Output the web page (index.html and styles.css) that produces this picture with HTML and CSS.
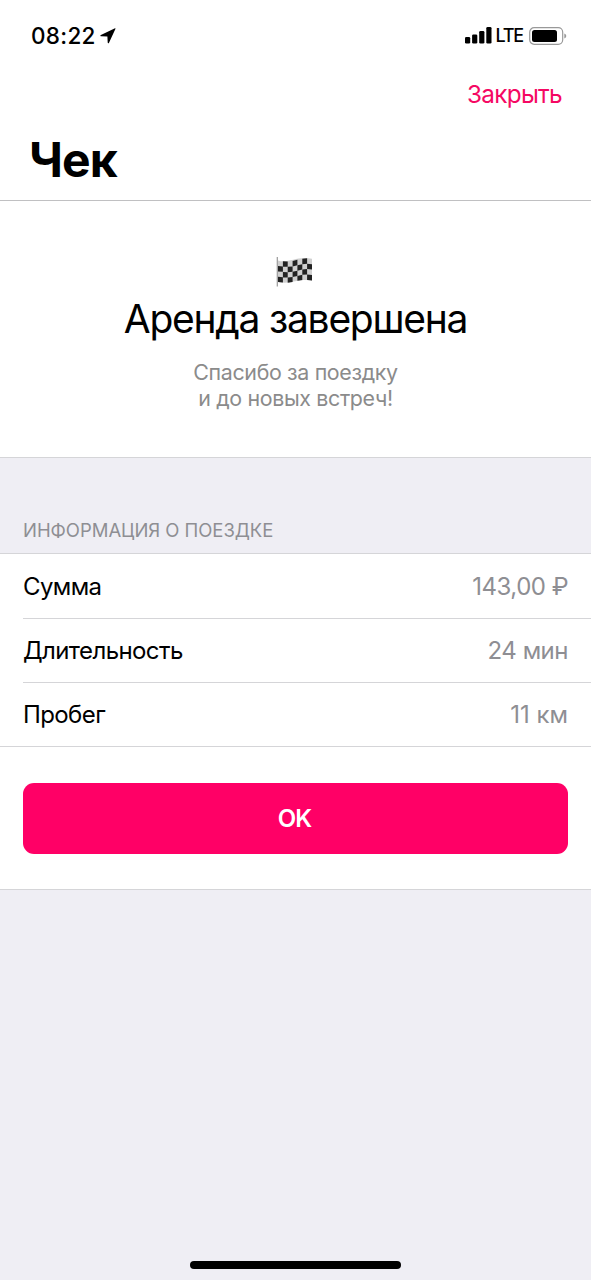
FILE: index.html
```html
<!DOCTYPE html>
<html lang="ru">
<head>
    <meta charset="UTF-8">
    <meta name="viewport" content="width=device-width, initial-scale=1.0">
    <title>Чек</title>
    <link rel="stylesheet" href="styles.css">
</head>
<body>
    <div class="screen">
        <header class="header">
            <div class="status">
                <div class="status-left">
                    <span class="time">08:22</span>
                    <svg class="location" width="16" height="16" viewBox="0 0 16 16">
                        <path d="M15.500.8 9 14.800c-.3.8-1.300.6-1.300-.2L7.400 8.600 1.200 8.300C.3 8.200.1 7.300.9 6.900L15 .3c.4-.1.6.2.5.5z"/>
                    </svg>
                </div>
                <div class="status-right">
                    <svg class="signal" width="27" height="17" viewBox="0 0 27 17">
                        <rect x="0" y="10" width="5.200" height="6.600" rx="1.300"/>
                        <rect x="7.100" y="7.400" width="5.200" height="9.200" rx="1.300"/>
                        <rect x="14.200" y="3.900" width="5.200" height="12.700" rx="1.300"/>
                        <rect x="21.300" y="0" width="5.200" height="16.600" rx="1.300"/>
                    </svg>
                    <span class="network">LTE</span>
                    <svg class="battery" width="38" height="18" viewBox="0 0 38 18">
                        <rect x=".7" y=".7" width="33" height="16.600" rx="4.500" fill="none" stroke="#999" stroke-width="1.200"/>
                        <rect x="3" y="3" width="25" height="12" rx="2.500"/>
                        <path d="M35.300 6.500q2 .8 2 2.500t-2 2.500z" fill="#999"/>
                    </svg>
                </div>
            </div>
            <div class="nav">
                <a class="close" href="#">Закрыть</a>
            </div>
            <h1 class="title">Чек</h1>
        </header>

        <section class="result">
            <svg class="flag" width="38" height="32" viewBox="0 0 38 32">
                <path d="M3 4.500C13 8 22-.5 37 2.800V24.500C23 22.500 15 29 3 26z" fill="#d0d0d0"/>
                <!-- 7 x 4 checks, every column follows the wave -->
                <g fill="#222">
                    <path d="M3 10l4.900.4v5.400L3 15.400zM3 20.800l4.900.5v5.200L3 26z"/>
                    <path d="M7.900 5.300l4.800.1v5.400l-4.800-.1zM7.900 16.100l4.800.1v5.400l-4.800-.1z"/>
                    <path d="M12.700 10.800l4.900-.4v5.400l-4.900.4zM12.700 21.600l4.900-.5v5l-4.900.6z"/>
                    <path d="M17.600 5l4.800-1.200v5.400l-4.800 1.200zM17.600 15.800l4.800-1v5.200l-4.800 1.100z"/>
                    <path d="M22.400 9.200l4.900-1v5.300l-4.900 1.300zM22.400 20l4.900-1.200V24l-4.900.8z"/>
                    <path d="M27.300 2.700l4.800-.4v5.400l-4.800.5zM27.300 13.500l4.800-.4v5.400l-4.800.3z"/>
                    <path d="M32.100 7.700l4.900.5v5.400l-4.900-.5zM32.100 18.500l4.900.5v5.500l-4.900-.4z"/>
                </g>
                <path d="M2.300 1v29.500" stroke="#999" stroke-width="1.200"/>
            </svg>
            <h2 class="result-title">Аренда завершена</h2>
            <p class="result-text">Спасибо за поездку<br>и до новых встреч!</p>
        </section>

        <h3 class="section-title">Информация о поездке</h3>

        <section class="details">
            <ul class="list">
                <li class="row"><span class="label">Сумма</span><span class="value">143,00 ₽</span></li>
                <li class="row"><span class="label">Длительность</span><span class="value">24 мин</span></li>
                <li class="row"><span class="label">Пробег</span><span class="value distance">11 км</span></li>
            </ul>
            <div class="actions">
                <button class="ok">OK</button>
            </div>
        </section>

        <div class="home-bar"></div>
    </div>
</body>
</html>
```

FILE: styles.css
```css
* {
    box-sizing: border-box;
    margin: 0;
    padding: 0;
}

body {
    background: #efeef4;
    color: #000;
    font-family: Inter, "Liberation Sans", sans-serif;
}

.screen {
    height: 1280px;
    display: flex;
    flex-direction: column;
}

.header {
    height: 201px;
    background: #fff;
    border-bottom: 1px solid #c0c0c2;
}

.status {
    height: 71px;
    padding: 0 24px 0 31px;
    display: flex;
    justify-content: space-between;
    align-items: center;
}

.status-left,
.status-right {
    display: flex;
    align-items: center;
}

.time {
    font-size: 22.5px;
    font-weight: 500;
    letter-spacing: 0.3px;
}

.location {
    margin-left: 4px;
}

.network {
    margin: 0 6px 0 4px;
    font-size: 18px;
    font-weight: 500;
    letter-spacing: -1.2px;
}

.nav {
    height: 45px;
    padding-right: 29px;
    display: flex;
    justify-content: flex-end;
    align-items: center;
}

.close {
    color: #f50863;
    font-size: 24.3px;
    letter-spacing: -0.7px;
    text-decoration: none;
}

.title {
    padding-left: 29px;
    font-size: 48px;
    line-height: 88px;
    letter-spacing: -0.9px;
}

.result {
    height: 257px;
    padding-top: 55px;
    background: #fff;
    border-bottom: 1px solid #d5d5d8;
    display: flex;
    flex-direction: column;
    align-items: center;
}

.flag {
    margin-right: 4px;
}

.result-title {
    margin-top: 6px;
    font-size: 39px;
    font-weight: 400;
    line-height: 50px;
    letter-spacing: -1.25px;
}

.result-text {
    margin-top: 15px;
    color: #8b8b8b;
    font-size: 21.4px;
    line-height: 26px;
    letter-spacing: -0.35px;
    text-align: center;
}

.section-title {
    height: 96px;
    padding: 60px 23px 0;
    border-bottom: 1px solid #d5d5d8;
    color: #8e8e93;
    font-size: 18.5px;
    font-weight: 400;
    line-height: 24px;
    letter-spacing: -0.05px;
    text-transform: uppercase;
}

.details {
    height: 336px;
    background: #fff;
    border-bottom: 1px solid #d5d5d8;
}

.list {
    list-style: none;
    border-bottom: 1px solid #d5d5d8;
}

.row {
    height: 64px;
    margin-left: 23px;
    padding-right: 23px;
    display: flex;
    justify-content: space-between;
    align-items: center;
    font-size: 24px;
}

.row + .row {
    border-top: 1px solid #d5d5d8;
}

.label {
    letter-spacing: -0.6px;
}

.value {
    color: #8e8e93;
    letter-spacing: -0.5px;
}

.distance {
    letter-spacing: 0;
}

.actions {
    padding: 36px 23px;
}

.ok {
    width: 100%;
    height: 71px;
    padding-right: 2px;
    border: none;
    border-radius: 11px;
    background: #ff0066;
    color: #fff;
    font-family: inherit;
    font-size: 24px;
    font-weight: 600;
    letter-spacing: -0.8px;
}

.home-bar {
    width: 211px;
    height: 8px;
    margin: auto auto 11px;
    border-radius: 4px;
    background: #000;
}
```
